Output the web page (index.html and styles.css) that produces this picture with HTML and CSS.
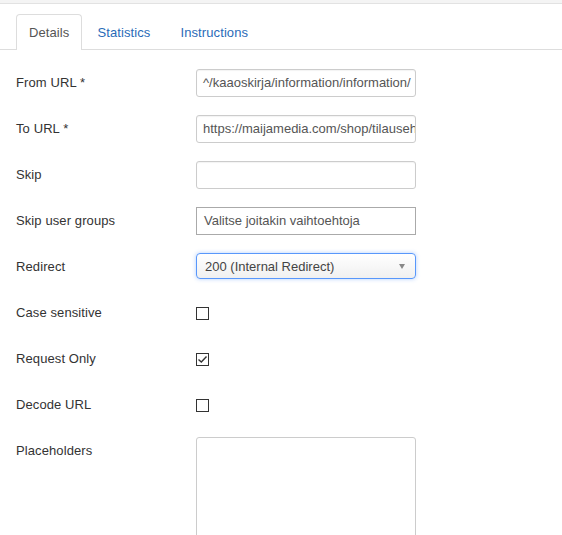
FILE: index.html
```html
<!DOCTYPE html>
<html>
<head>
<meta charset="utf-8">
<link rel="stylesheet" href="styles.css">
</head>
<body>
<div class="topstrip"></div>
<div class="tabs">
  <div class="tab active">Details</div>
  <div class="tab">Statistics</div>
  <div class="tab">Instructions</div>
</div>
<div class="form">
  <div class="row">
    <div class="label">From URL *</div>
    <div class="input">^/kaaoskirja/information/information/</div>
  </div>
  <div class="row">
    <div class="label">To URL *</div>
    <div class="input">https://maijamedia.com/shop/tilauseh</div>
  </div>
  <div class="row">
    <div class="label">Skip</div>
    <div class="input"></div>
  </div>
  <div class="row">
    <div class="label">Skip user groups</div>
    <div class="input chosen">Valitse joitakin vaihtoehtoja</div>
  </div>
  <div class="row">
    <div class="label">Redirect</div>
    <div class="select"><span>200 (Internal Redirect)</span><span class="arrow"></span></div>
  </div>
  <div class="row">
    <div class="label">Case sensitive</div>
    <div class="cbwrap"><span class="checkbox"></span></div>
  </div>
  <div class="row">
    <div class="label">Request Only</div>
    <div class="cbwrap"><span class="checkbox"><svg width="11" height="11" viewBox="0 0 11 11"><path d="M1.5 5.5 L4.3 8 L9.5 2.5" fill="none" stroke="#333" stroke-width="1.4"/></svg></span></div>
  </div>
  <div class="row">
    <div class="label">Decode URL</div>
    <div class="cbwrap"><span class="checkbox"></span></div>
  </div>
  <div class="row">
    <div class="label">Placeholders</div>
    <div class="textarea"></div>
  </div>
</div>
</body>
</html>
```
FILE: styles.css
```css
html, body {
  margin: 0;
  padding: 0;
  background: #fff;
  font-family: "Liberation Sans", Arial, sans-serif;
  font-size: 13px;
  color: #333;
  overflow: hidden;
}
.topstrip {
  height: 3px;
  background: #f4f4f4;
  border-bottom: 1px solid #e2e2e2;
}
.tabs {
  display: flex;
  margin-top: 10px;
  padding-left: 16px;
  border-bottom: 1px solid #ddd;
}
.tab {
  height: 34px;
  line-height: 35px;
  padding: 0 14px;
  color: #2a6bb8;
  border: 1px solid transparent;
  border-bottom: none;
  margin-bottom: -1px;
  letter-spacing: 0.1px;
}
.tab.active {
  color: #555;
  background: #fff;
  border-color: #ddd;
  border-radius: 4px 4px 0 0;
  padding: 0 12px;
  height: 35px;
}
.form {
  padding: 19px 0 0 16px;
}
.row {
  display: flex;
  align-items: flex-start;
  margin-bottom: 18px;
  min-height: 28px;
}
.label {
  width: 180px;
  line-height: 28px;
  flex-shrink: 0;
  letter-spacing: 0.1px;
}
.input {
  box-sizing: border-box;
  width: 220px;
  height: 28px;
  border: 1px solid #ccc;
  border-radius: 3px;
  padding: 0 4px 0 6px;
  line-height: 26px;
  color: #555;
  white-space: nowrap;
  overflow: hidden;
  box-shadow: inset 0 1px 1px rgba(0,0,0,0.05);
}
.input.chosen {
  border-color: #aaa;
  border-radius: 0;
  color: #555;
  box-shadow: none;
  padding-left: 7px;
}
.select {
  box-sizing: border-box;
  width: 220px;
  height: 26px;
  margin-top: 0;
  border: 1px solid #5897fb;
  border-radius: 4px;
  background: linear-gradient(#fff, #f0f0f0);
  box-shadow: 0 0 4px rgba(88,151,251,0.45);
  display: flex;
  align-items: center;
  justify-content: space-between;
  padding: 0 10px 0 8px;
  color: #444;
}
.arrow {
  width: 0;
  height: 0;
  border-left: 3.5px solid transparent;
  border-right: 3.5px solid transparent;
  border-top: 5px solid #888;
}
.cbwrap {
  height: 28px;
  display: flex;
  align-items: center;
}
.checkbox {
  box-sizing: border-box;
  width: 13px;
  height: 13px;
  border: 1px solid #333;
  display: flex;
  align-items: center;
  justify-content: center;
}
.checkbox svg {
  display: block;
}
.textarea {
  box-sizing: border-box;
  width: 220px;
  height: 120px;
  border: 1px solid #ccc;
  border-radius: 3px;
}
```
